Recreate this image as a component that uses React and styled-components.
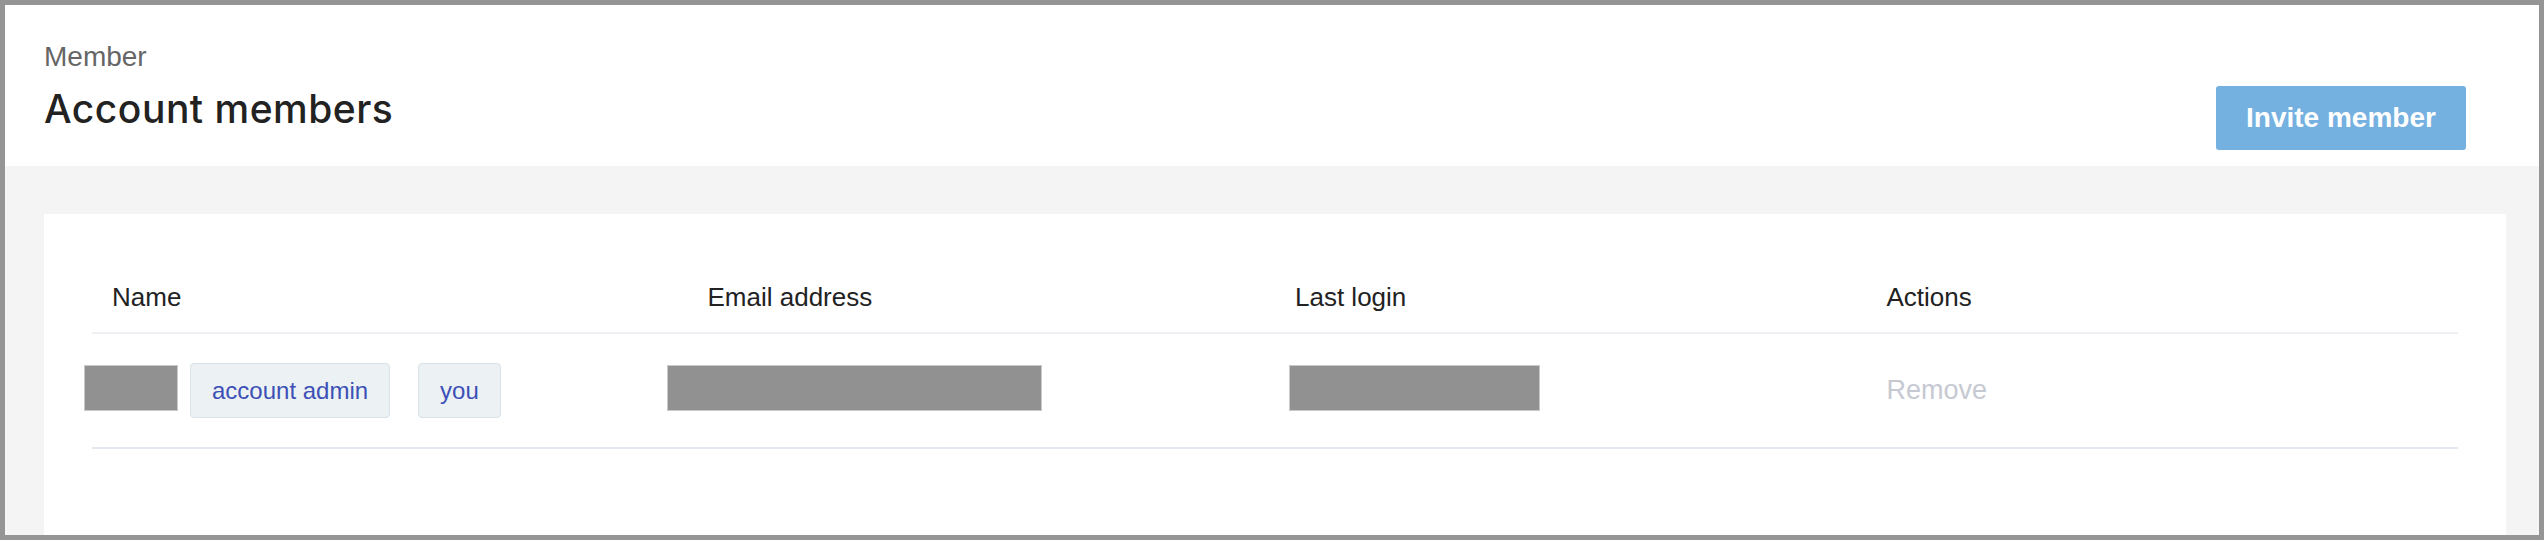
import React from "react";
import styled, { createGlobalStyle } from "styled-components";

const GlobalStyle = createGlobalStyle`
  * { box-sizing: border-box; }
  body {
    margin: 0;
    font-family: "Liberation Sans", Arial, sans-serif;
    background: #ffffff;
  }
`;

const Frame = styled.div`
  width: 2544px;
  height: 540px;
  border: 5px solid #959595;
  display: flex;
  flex-direction: column;
  overflow: hidden;
  background: #f4f4f4;
`;

const Header = styled.header`
  height: 161px;
  flex-shrink: 0;
  background: #ffffff;
  padding: 36px 73px 0 39px;
  display: flex;
  justify-content: space-between;
  align-items: flex-start;
`;

const TitleGroup = styled.div`
  display: flex;
  flex-direction: column;
  gap: 12px;
`;

const Crumb = styled.div`
  font-size: 28px;
  line-height: 32px;
  color: #666666;
`;

const Title = styled.h1`
  margin: 0;
  font-family: Inter, "Liberation Sans", Arial, sans-serif;
  font-size: 39px;
  line-height: 48px;
  font-weight: 500;
  letter-spacing: 0.5px;
  color: #222222;
`;

const InviteButton = styled.button`
  margin-top: 45px;
  width: 250px;
  height: 64px;
  border: none;
  border-radius: 3px;
  background: #74b0e0;
  color: #ffffff;
  font-family: "Liberation Sans", Arial, sans-serif;
  font-size: 28px;
  font-weight: 700;
  cursor: pointer;
`;

const Body = styled.main`
  flex: 1;
  padding: 48px 33px 0 39px;
`;

const Card = styled.section`
  background: #ffffff;
  height: 100%;
  padding: 48px 48px 0;
`;

const Row = styled.div`
  display: grid;
  grid-template-columns: repeat(4, 1fr);
  border-bottom: 2px solid ${({ head }) => (head ? "#eef0f3" : "#e4e8f1")};
  height: ${({ head }) => (head ? "72px" : "115px")};
`;

const Cell = styled.div`
  display: flex;
  align-items: center;
  padding-left: ${({ indent }) => indent || 20}px;
  font-size: ${({ head }) => (head ? "26px" : "27px")};
  color: #222222;
  min-width: 0;
`;

const Redacted = styled.span`
  display: inline-block;
  flex-shrink: 0;
  height: 46px;
  width: ${({ w }) => w}px;
  margin-left: ${({ shift }) => shift}px;
  margin-bottom: 6px;
  background: #919191;
  border: 1px solid #c9c9c9;
`;

const Tag = styled.span`
  display: inline-block;
  flex-shrink: 0;
  margin-left: ${({ space }) => space}px;
  height: 55px;
  line-height: 53px;
  padding: 0 21px;
  font-size: 24px;
  color: #3c50b6;
  background: #ecf1f4;
  border: 1px solid #d8e2e8;
  border-radius: 4px;
`;

const RemoveLink = styled.span`
  color: #c6c9d1;
  cursor: pointer;
`;

const columns = ["Name", "Email address", "Last login", "Actions"];

export default function App() {
  return (
    <>
      <GlobalStyle />
      <Frame>
        <Header>
          <TitleGroup>
            <Crumb>Member</Crumb>
            <Title>Account members</Title>
          </TitleGroup>
          <InviteButton>Invite member</InviteButton>
        </Header>
        <Body>
          <Card>
            <Row head>
              {columns.map((c, i) => (
                <Cell head key={c} indent={i === 1 ? 24 : 20}>
                  {c}
                </Cell>
              ))}
            </Row>
            <Row>
              <Cell>
                <Redacted w={94} shift={-28} />
                <Tag space={12}>account admin</Tag>
                <Tag space={28}>you</Tag>
              </Cell>
              <Cell>
                <Redacted w={375} shift={-37} />
              </Cell>
              <Cell>
                <Redacted w={251} shift={-6} />
              </Cell>
              <Cell>
                <RemoveLink>Remove</RemoveLink>
              </Cell>
            </Row>
          </Card>
        </Body>
      </Frame>
    </>
  );
}
